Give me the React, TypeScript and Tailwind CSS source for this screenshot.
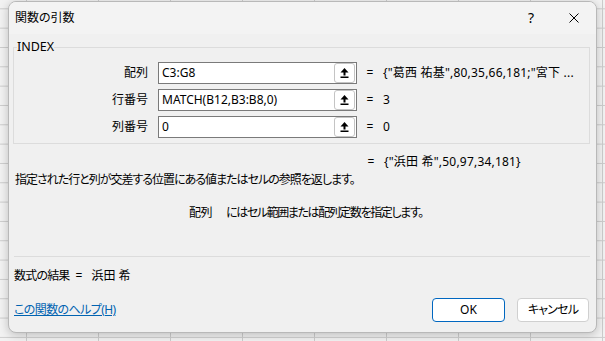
import React from "react";

const font = "font-['Noto_Sans','Noto_Sans_CJK_JP',sans-serif] [font-feature-settings:'palt']";

function RefIcon() {
  return (
    <svg width="9" height="10" viewBox="0 0 9 10">
      <polygon points="4.5,0 0.5,4.5 8.5,4.5" fill="#000" />
      <rect x="3.5" y="4" width="2" height="3.5" fill="#000" />
      <rect x="0.5" y="8.5" width="8" height="1.5" fill="#000" />
    </svg>
  );
}

function Row({ label, value, result }: { label: string; value: string; result: string }) {
  return (
    <div className="flex items-center h-[22px]">
      <div className="w-[134px] text-right leading-[16px]">{label}</div>
      <div className="ml-[10px] w-[199px] h-[22px] bg-white border border-[#7a7a7a] flex items-center">
        <div className="flex-1 pl-[3px] leading-[16px] whitespace-nowrap overflow-hidden">{value}</div>
        <div className="w-[21px] h-[20px] mr-[1px] border border-[#c4c4c4] rounded-[3px] bg-white flex items-center justify-center">
          <RefIcon />
        </div>
      </div>
      <div className="w-[26px] text-center leading-[16px]">=</div>
      <div className="leading-[16px] whitespace-nowrap tracking-[0.2px]">{result}</div>
    </div>
  );
}

export default function App() {
  return (
    <div
      className={`w-[605px] h-[341px] overflow-hidden bg-[#f2f2f2] bg-[linear-gradient(to_right,#cccccc_1px,transparent_1px),linear-gradient(to_bottom,#cccccc_1px,transparent_1px)] bg-[size:72px_19.33px] bg-[position:26px_8.33px] pl-[8px] pt-[1px] ${font} text-[12px] text-[#000]`}
    >
      <div className="w-[589px] h-[332px] rounded-[8px] border border-[#b8b8b8] bg-[#f0f0f0] shadow-[0_2px_10px_rgba(0,0,0,0.22)] overflow-hidden flex flex-col">
        <div className="h-[32px] bg-[#f3f3f3] flex items-center pl-[6px] shrink-0">
          <div className="leading-[16px]">関数の引数</div>
          <div className="ml-auto w-[20px] text-center text-[14px] leading-[16px] mr-[28px]">?</div>
          <div className="mr-[17px] w-[10px] h-[10px]">
            <svg width="10" height="10" viewBox="0 0 10 10">
              <path d="M0.5 0.5 L9.5 9.5 M9.5 0.5 L0.5 9.5" stroke="#000" strokeWidth="1" />
            </svg>
          </div>
        </div>
        <div className="flex-1 pl-[4px] pr-[6px] pt-[5px] flex flex-col">
          <fieldset className="border border-[#dcdcdc] pb-[5px]">
            <legend className="ml-[3px] leading-[16px] text-[12.5px]">INDEX</legend>
            <div className="pt-[7px] flex flex-col gap-[5px]">
              <Row label="配列" value="C3:G8" result={'{"葛西 祐基",80,35,66,181;"宮下 ...'} />
              <Row label="行番号" value="MATCH(B12,B3:B8,0)" result="3" />
              <Row label="列番号" value="0" result="0" />
            </div>
          </fieldset>
          <div className="mt-[10px] flex leading-[16px]">
            <div className="ml-[345px] w-[26px] text-center">=</div>
            <div className="tracking-[0.2px]">{'{"浜田 希",50,97,34,181}'}</div>
          </div>
          <div className="mt-[2px] ml-[2px] leading-[16px] tracking-[-1px] whitespace-nowrap">
            指定された行と列が交差する位置にある値またはセルの参照を返します。
          </div>
          <div className="mt-[17px] flex leading-[16px] whitespace-nowrap">
            <div className="ml-[176px] tracking-[-0.5px]">配列</div>
            <div className="ml-[14px] tracking-[-1.4px]">にはセル範囲または配列定数を指定します。</div>
          </div>
          <div className="mt-[35px] ml-[1px] h-px bg-[#dcdcdc]" />
          <div className="mt-[11px] ml-[1px] flex leading-[16px]">
            <div className="tracking-[-0.8px]">数式の結果</div>
            <div className="ml-[6px]">=</div>
            <div className="ml-[9px]">浜田 希</div>
          </div>
          <div className="mt-[14px] flex items-center h-[24px]">
            <a className="ml-[1px] text-[#0063b1] underline leading-[16px] tracking-[-0.6px]" href="#">
              この関数のヘルプ(H)
            </a>
            <button className="ml-auto w-[73px] h-[24px] bg-white border border-[#0067c0] rounded-[4px] leading-[16px]">
              OK
            </button>
            <button className="ml-[12px] mr-[1px] w-[72px] h-[24px] bg-white border border-[#d0d0d0] rounded-[4px] leading-[16px] tracking-[-0.8px]">
              キャンセル
            </button>
          </div>
        </div>
      </div>
    </div>
  );
}
